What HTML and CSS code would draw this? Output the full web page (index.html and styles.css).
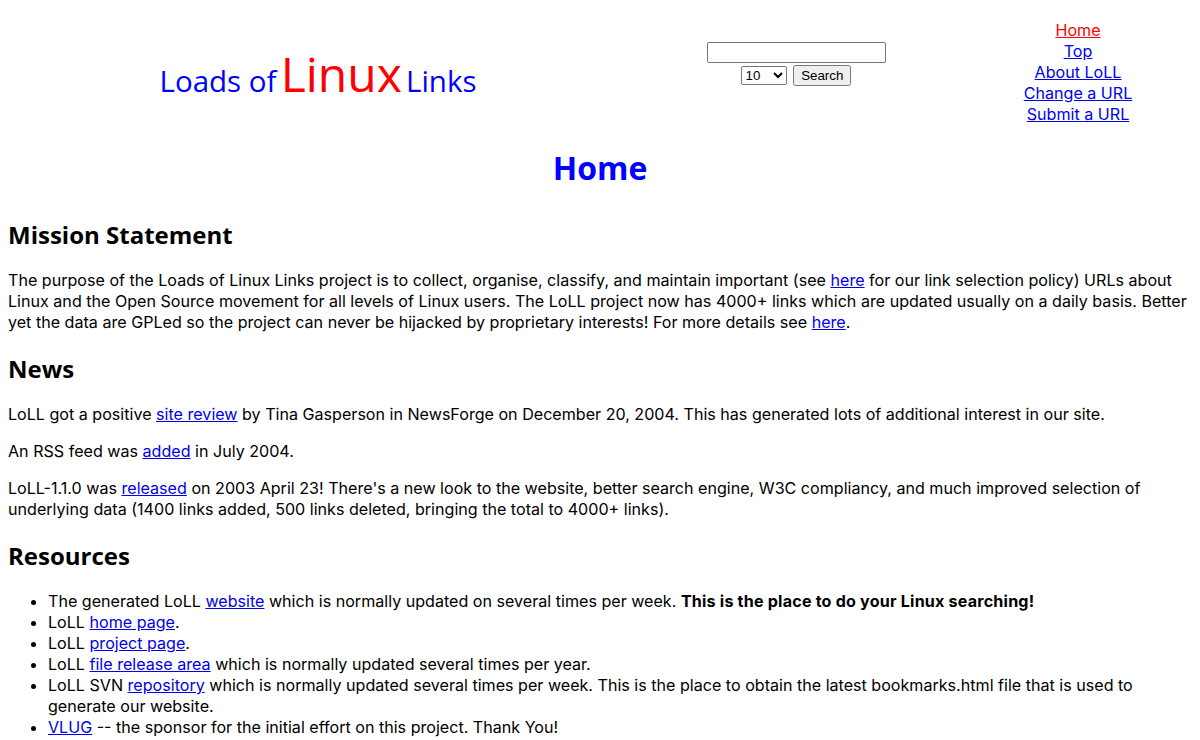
FILE: index.html
```html
<!DOCTYPE html>
<html>
<head>
    <meta charset="utf-8" />
    <title>Loads of Linux Links</title>
    <link rel="stylesheet" href="styles.css">
</head>
<body>
    <div class="cabecera">
        <div class="logo">
            <span class="logoChico">Loads of</span>
            <span class="logoGrande">Linux</span>
            <span class="logoChico">Links</span>
        </div>

        <form class="buscar" name="formbuscar">
            <div><input type="text" name="q" class="cajaTexto" /></div>
            <div>
                <select name="cant" class="cantidad">
                    <option>10</option>
                    <option>20</option>
                    <option>50</option>
                </select>
                <input type="submit" value="Search" class="botonBuscar" />
            </div>
        </form>

        <div class="menu">
            <a href="#" class="actual">Home</a>
            <a href="#">Top</a>
            <a href="#">About LoLL</a>
            <a href="#">Change a URL</a>
            <a href="#">Submit a URL</a>
        </div>
    </div>

    <h1>Home</h1>

    <h2>Mission Statement</h2>

    <p>The purpose of the Loads of Linux Links project is to collect, organise, classify, and maintain important (see <a href="#">here</a> for our link selection policy) URLs about Linux and the Open Source movement for all levels of Linux users. The LoLL project now has 4000+ links which are updated usually on a daily basis. Better yet the data are GPLed so the project can never be hijacked by proprietary interests! For more details see <a href="#">here</a>.</p>

    <h2>News</h2>

    <p>LoLL got a positive <a href="#">site review</a> by Tina Gasperson in NewsForge on December 20, 2004. This has generated lots of additional interest in our site.</p>

    <p>An RSS feed was <a href="#">added</a> in July 2004.</p>

    <p>LoLL-1.1.0 was <a href="#">released</a> on 2003 April 23! There's a new look to the website, better search engine, W3C compliancy, and much improved selection of underlying data (1400 links added, 500 links deleted, bringing the total to 4000+ links).</p>

    <h2>Resources</h2>

    <ul>
        <li>The generated LoLL <a href="#">website</a> which is normally updated on several times per week. <b>This is the place to do your Linux searching!</b></li>
        <li>LoLL <a href="#">home page</a>.</li>
        <li>LoLL <a href="#">project page</a>.</li>
        <li>LoLL <a href="#">file release area</a> which is normally updated several times per year.</li>
        <li>LoLL SVN <a href="#">repository</a> which is normally updated several times per week. This is the place to obtain the latest bookmarks.html file that is used to generate our website.</li>
        <li><a href="#">VLUG</a> -- the sponsor for the initial effort on this project. Thank You!</li>
    </ul>
</body>
</html>
```
FILE: styles.css
```css
body {
    font-family: Inter, sans-serif;
    font-size: 16.1px;
    line-height: 21px;
    margin: 8px;
    color: #000000;
}
a {
    color: #0000ee;
}
b {
    letter-spacing: 0.2px;
}
.cabecera {
    display: grid;
    grid-template-columns: 620px 336px 1fr;
    align-items: center;
    padding-top: 12px;
}
.logo {
    font-family: "Open Sans", sans-serif;
    text-align: center;
    color: #0000ff;
    line-height: 40px;
    padding-top: 14px;
}
.logoChico {
    font-size: 29.5px;
}
.logoGrande {
    font-size: 48px;
    color: #ff0000;
}
.buscar {
    text-align: center;
    margin: 0;
    padding-bottom: 20px;
}
.buscar div {
    line-height: 22px;
}
.cajaTexto {
    width: 171px;
}
.cantidad {
    width: 46px;
    margin-right: 2px;
}
.menu {
    text-align: center;
}
.menu a {
    display: block;
}
.menu .actual {
    color: #ff0000;
}
h1 {
    font-family: "Open Sans", sans-serif;
    text-align: center;
    color: #0000ff;
    font-size: 32px;
    line-height: 40px;
    margin: 23px 0 32px 0;
}
h2 {
    font-family: "Open Sans", sans-serif;
    font-size: 24px;
    line-height: 30px;
    margin: 0 0 20px 0;
}
p {
    margin: 0 0 16px 0;
}
p + h2 {
    margin-top: 21px;
}
ul {
    margin: 0;
    padding-left: 40px;
}
```
